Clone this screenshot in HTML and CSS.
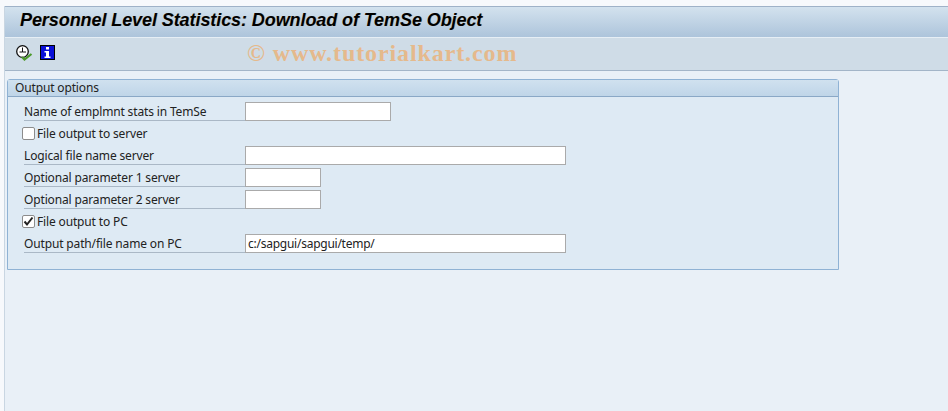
FILE: index.html
```html
<!DOCTYPE html>
<html lang="en">
<head>
<meta charset="UTF-8">
<meta name="viewport" content="width=device-width, initial-scale=1.0">
<title>Personnel Level Statistics</title>
<link rel="stylesheet" href="styles.css">
</head>
<body>
    <div class="wrapper">
        <div class="title">Personnel Level Statistics: Download of TemSe Object</div>

        <div class="toolbar">
            <svg class="icon" width="17" height="16" viewBox="0 0 17 16">
                <circle cx="6.500" cy="6.500" r="5.800" fill="#fff" stroke="#111" stroke-width="1.300"/>
                <path d="M6.500 2.500v4.500h3.500M6.500 7H3.500" fill="none" stroke="#111" stroke-width="1"/>
                <path d="M6 12l2.500 2.500L15.500 9" fill="none" stroke="#4c9a2a" stroke-width="2.200"/>
            </svg>
            <svg class="icon" width="15" height="15" viewBox="0 0 15 15">
                <rect x="0.500" y="0.500" width="14" height="14" fill="#0a10d8" stroke="#000"/>
                <rect x="6" y="2" width="3" height="2.500" fill="#fff"/>
                <path d="M4.500 6h4.500v5.500h1.500V13h-6v-1.500H6V7.500H4.500z" fill="#fff"/>
            </svg>
            <div class="watermark">© www.tutorialkart.com</div>
        </div>

        <div class="group">
            <div class="group-title">Output options</div>
            <div class="group-body">
                <div class="row">
                    <label class="lbl">Name of emplmnt stats in TemSe</label>
                    <input class="field w-md" type="text">
                </div>
                <div class="row check-row">
                    <span class="check"></span>
                    <label>File output to server</label>
                </div>
                <div class="row">
                    <label class="lbl">Logical file name server</label>
                    <input class="field w-lg" type="text">
                </div>
                <div class="row">
                    <label class="lbl">Optional parameter 1 server</label>
                    <input class="field w-sm" type="text">
                </div>
                <div class="row">
                    <label class="lbl">Optional parameter 2 server</label>
                    <input class="field w-sm" type="text">
                </div>
                <div class="row check-row">
                    <span class="check">
                        <svg width="11" height="11" viewBox="0 0 11 11"><path d="M1.500 5.500l2.500 3L9.500 1.500" fill="none" stroke="#222" stroke-width="2"/></svg>
                    </span>
                    <label>File output to PC</label>
                </div>
                <div class="row">
                    <label class="lbl">Output path/file name on PC</label>
                    <input class="field w-lg" type="text" value="c:/sapgui/sapgui/temp/">
                </div>
            </div>
        </div>
    </div>
</body>
</html>
```

FILE: styles.css
```css
* {
    margin: 0;
    padding: 0;
    box-sizing: border-box;
    font-family: 'Noto Sans', sans-serif;
}
html, body {
    height: 411px;
    overflow: hidden;
}
body {
    background-color: #f7f9fc;
    padding-top: 6px;
}
.wrapper {
    height: 405px;
    margin-left: 4px;
    background-color: #e9f0f7;
    border-left: 1px solid #c9d6e2;
}
.title {
    height: 31px;
    padding-left: 15px;
    border-top: 1px solid #9fb2c8;
    background: linear-gradient(#d3e2ee, #adc4db);
    font-family: 'Liberation Sans', sans-serif;
    font-size: 18px;
    font-weight: 700;
    font-style: italic;
    line-height: 26px;
    letter-spacing: -0.08px;
    color: #000;
    text-shadow: 1px 0 0 rgba(200, 140, 40, 0.25);
}
.toolbar {
    position: relative;
    height: 34px;
    padding: 7px 0 0 11px;
    display: flex;
    align-items: flex-start;
    gap: 7px;
    border-top: 1px solid #e6eef5;
    border-bottom: 1px solid #a3b5c8;
    background-color: #cfdce7;
}
.watermark {
    position: absolute;
    left: 242px;
    top: 1px;
    font-family: 'Liberation Serif', serif;
    font-size: 24px;
    font-weight: 700;
    line-height: 28px;
    letter-spacing: 0.9px;
    color: #e5b98c;
    white-space: nowrap;
}
.group {
    width: 832px;
    height: 191px;
    margin: 8px 0 0 2px;
    border: 1px solid #8fb2d4;
    border-radius: 3px 3px 0 0;
    background-color: #deeaf4;
}
.group-title {
    height: 17px;
    padding-left: 7px;
    border-bottom: 1px solid #8aa8c6;
    background: linear-gradient(#d0e1ef, #bfd5e8);
    font-size: 12px;
    line-height: 15px;
    letter-spacing: -0.15px;
    color: #222;
}
.group-body {
    padding: 5px 0 0 16px;
}
.row {
    display: flex;
    align-items: flex-start;
    height: 19px;
    margin-bottom: 3px;
    font-size: 12px;
    line-height: 19px;
    letter-spacing: -0.15px;
    color: #222;
}
.lbl {
    width: 221px;
    height: 19px;
    border-bottom: 1px solid #aab8c6;
}
.check-row {
    gap: 2px;
}
.check {
    width: 13px;
    height: 13px;
    margin: 3px 0 0 -2px;
    border: 1px solid #8c8c8c;
    border-radius: 2px;
    background-color: #fff;
    display: flex;
    align-items: center;
    justify-content: center;
}
.field {
    height: 19px;
    padding-left: 2px;
    border: 1px solid #aaa;
    background-color: #fff;
    font-size: 12px;
    letter-spacing: -0.25px;
    color: #222;
}
.w-sm { width: 76px; }
.w-md { width: 146px; }
.w-lg { width: 321px; }
```
